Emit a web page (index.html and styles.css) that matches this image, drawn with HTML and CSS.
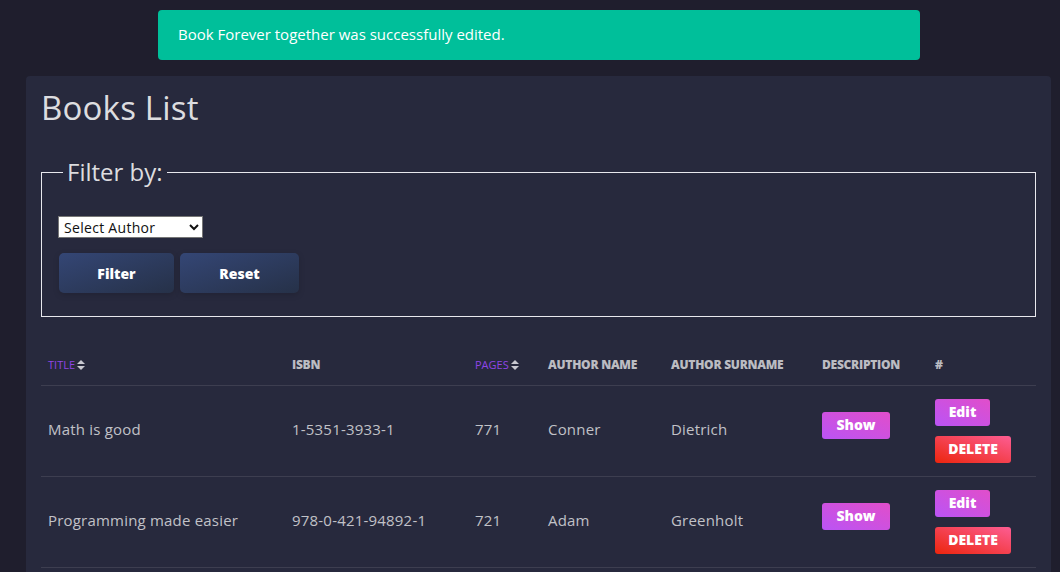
FILE: index.html
```html
<!DOCTYPE html>
<html lang="en">
<head>
<meta charset="utf-8">
<title>Books List</title>
<link rel="stylesheet" href="styles.css">
</head>
<body>
<div class="wrap">
  <div class="alert">Book Forever together was successfully edited.</div>
  <div class="card">
    <h1 class="title">Books List</h1>
    <fieldset class="filter">
      <legend>Filter by:</legend>
      <select class="select">
        <option>Select Author</option>
      </select>
      <div class="btns">
        <button class="btn btn-default btn-filter">Filter</button>
        <button class="btn btn-default btn-reset">Reset</button>
      </div>
    </fieldset>
    <table class="table">
      <colgroup>
        <col class="c1"><col class="c2"><col class="c3"><col class="c4"><col class="c5"><col class="c6"><col class="c7">
      </colgroup>
      <thead>
        <tr>
          <th><span class="sort">TITLE</span><svg class="caret" viewBox="0 0 8 10" width="8" height="10"><path d="M4 0L8 4H0Z M0 6H8L4 10Z" fill="#c9c9d1"/></svg></th>
          <th>ISBN</th>
          <th><span class="sort">PAGES</span><svg class="caret" viewBox="0 0 8 10" width="8" height="10"><path d="M4 0L8 4H0Z M0 6H8L4 10Z" fill="#c9c9d1"/></svg></th>
          <th>AUTHOR NAME</th>
          <th>AUTHOR SURNAME</th>
          <th>DESCRIPTION</th>
          <th>#</th>
        </tr>
      </thead>
      <tbody>
        <tr>
          <td>Math is good</td>
          <td>1-5351-3933-1</td>
          <td>771</td>
          <td>Conner</td>
          <td>Dietrich</td>
          <td class="show-cell"><button class="btn-sm btn-primary btn-show">Show</button></td>
          <td class="act-cell"><div class="actions"><button class="btn-sm btn-primary btn-edit">Edit</button><button class="btn-sm btn-danger btn-delete">DELETE</button></div></td>
        </tr>
        <tr>
          <td>Programming made easier</td>
          <td>978-0-421-94892-1</td>
          <td>721</td>
          <td>Adam</td>
          <td>Greenholt</td>
          <td class="show-cell"><button class="btn-sm btn-primary btn-show">Show</button></td>
          <td class="act-cell"><div class="actions"><button class="btn-sm btn-primary btn-edit">Edit</button><button class="btn-sm btn-danger btn-delete">DELETE</button></div></td>
        </tr>
      </tbody>
    </table>
  </div>
</div>
</body>
</html>
```
FILE: styles.css
```css
html, body {
  margin: 0;
  padding: 0;
  height: 100%;
}
body {
  background: #1f1e2d;
  font-family: "Open Sans", "Noto Sans", sans-serif;
  color: rgba(255, 255, 255, 0.8);
  overflow: hidden;
}
.wrap {
  padding: 10px 9px 0 26px;
}
.alert {
  margin: 0 131px 16px 132px;
  height: 50px;
  box-sizing: border-box;
  padding: 0 20px 2px 20px;
  display: flex;
  align-items: center;
  background: #00bf9a;
  color: #fff;
  border-radius: 4px;
  font-size: 15px;
}
.card {
  background: #27293d;
  border-radius: 4px;
  padding: 12px 15px 20px 15px;
  min-height: 520px;
}
.title {
  margin: 0;
  font-weight: 400;
  font-size: 33px;
  line-height: 40px;
  color: rgba(255, 255, 255, 0.85);
  letter-spacing: 0.2px;
}
.filter {
  margin: 30px 0 0 0;
  border: 1px solid #e8e8ee;
  padding: 12px 16px 23px 16px;
}
.filter legend {
  padding: 0 4px;
  margin-left: 5px;
  font-size: 24px;
  line-height: 28px;
  color: rgba(255, 255, 255, 0.85);
}
.select {
  margin-top: 18px;
  width: 145px;
  height: 22px;
  font-family: "Open Sans", sans-serif;
  font-size: 14px;
  letter-spacing: 0.3px;
  background: #fff;
  color: #111;
  border: 1px solid #767676;
  border-radius: 0;
  padding: 0 1px;
}
.btns {
  display: flex;
  gap: 6px;
  margin-top: 15px;
  padding-left: 1px;
}
.btn {
  height: 40px;
  border: none;
  border-radius: 5px;
  color: #fff;
  font-family: "Open Sans", sans-serif;
  font-weight: 800;
  font-size: 14px;
}
.btn-default {
  background: linear-gradient(to bottom right, #344675, #263148);
  box-shadow: 0 2px 6px rgba(0,0,0,0.15);
}
.btn-filter { width: 115px; }
.btn-reset { width: 119px; }
.table {
  margin-top: 26px;
  width: 100%;
  border-collapse: collapse;
  table-layout: fixed;
}
.c1 { width: 244px; }
.c2 { width: 183px; }
.c3 { width: 73px; }
.c4 { width: 123px; }
.c5 { width: 151px; }
.c6 { width: 113px; }
.c7 { width: auto; }
.table th {
  text-align: left;
  font-size: 12px;
  font-weight: 800;
  letter-spacing: -0.25px;
  color: rgba(255, 255, 255, 0.7);
  padding: 13px 7px 12px 7px;
  border-bottom: 1px solid rgba(255, 255, 255, 0.1);
  white-space: nowrap;
}
.sort {
  color: #8f45e6;
  font-weight: 400;
  font-size: 11px;
  letter-spacing: 0;
}
.caret {
  margin-left: 2px;
  vertical-align: -1px;
}
.table td {
  font-size: 15px;
  letter-spacing: 0.2px;
  color: rgba(255, 255, 255, 0.72);
  padding: 11px 7px 15px 7px;
  height: 64px;
  border-bottom: 1px solid rgba(255, 255, 255, 0.1);
  vertical-align: middle;
}
.table td.show-cell {
  padding: 7px 7px 19px 7px;
}
.table td.act-cell {
  padding: 13px 7px 13px 7px;
}
.actions {
  display: flex;
  flex-direction: column;
  align-items: flex-start;
  gap: 10px;
}
.btn-sm {
  height: 27px;
  border: none;
  border-radius: 3px;
  color: #fff;
  font-family: "Open Sans", sans-serif;
  font-weight: 800;
  font-size: 14px;
  letter-spacing: 0;
  padding: 0 0 2px 0;
}
.btn-primary {
  background: linear-gradient(to bottom left, #e14eca, #ba54f5);
}
.btn-danger {
  background: linear-gradient(to bottom left, #fd5d93, #ec250d);
}
.btn-show { width: 68px; }
.btn-edit { width: 55px; }
.btn-delete { width: 76px; }
```
